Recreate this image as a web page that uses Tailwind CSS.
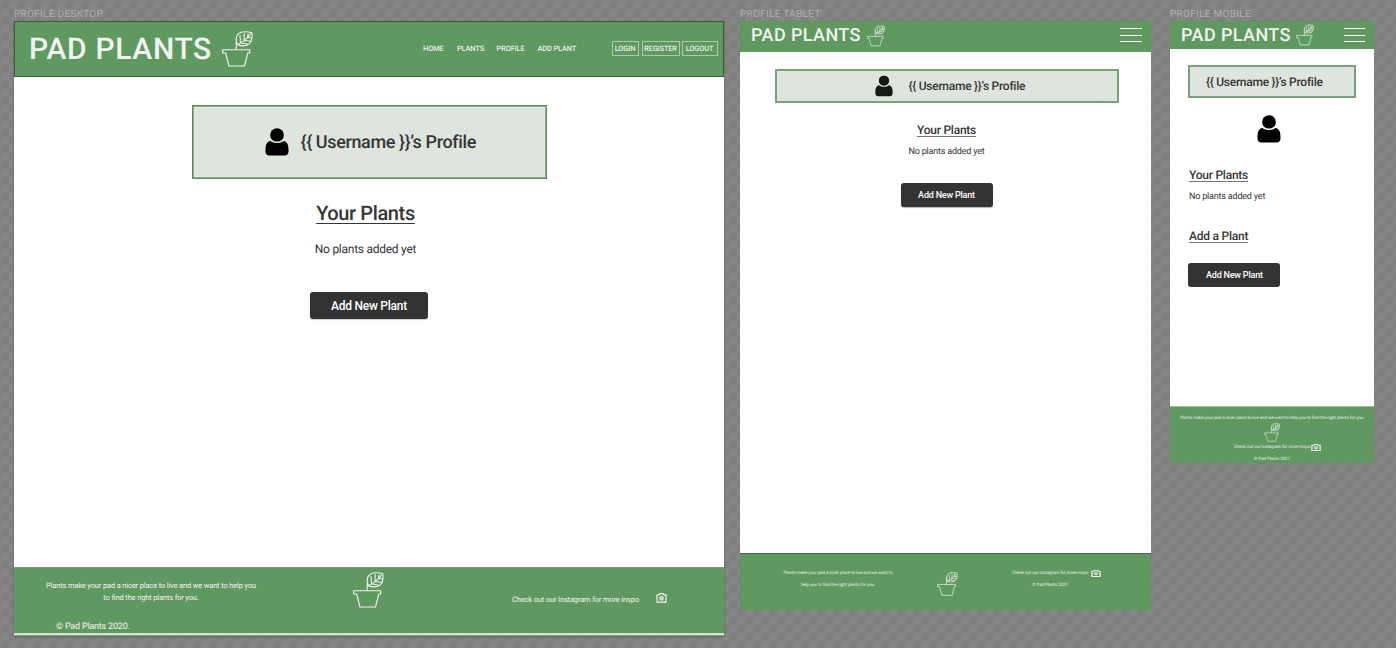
<!DOCTYPE html>
<html lang="en">
<head>
<meta charset="utf-8">
<title>Pad Plants – Profile</title>
<script src="https://cdn.jsdelivr.net/npm/@tailwindcss/browser@4"></script>
</head>
<body class="w-[1396px] h-[648px] overflow-hidden bg-[conic-gradient(#868686_25%,#7f7f7f_0_50%,#868686_0_75%,#7f7f7f_0)] bg-[length:16px_16px] bg-[position:1px_1px] font-['Roboto',sans-serif] text-[#363636] [text-rendering:geometricPrecision]">
<svg class="hidden">
  <symbol id="pot" viewBox="0 0 31 36"><g fill="none" stroke="currentColor" stroke-width="1.1" stroke-linejoin="round" stroke-linecap="round">
    <path d="M.7 18.700h27v3.300h-1.900l-3.300 13h-15.500l-3.400-13h-2.900z"/>
    <path d="M14.200 18.500V8C14.500 3 18 .7 23 .7c3 0 5.500.500 6.700 1C30.500 6 30 10 27.500 12.700c-3 2.700-8.500 2.800-11.800 1C14.500 12 14 10 14.200 8M15.500 13.700C19 12 25 8 28.500 3M18.500 11.800 18 4.500M22 9.500l.3-7M25.500 6.700l.5-3.700M18.500 11.800l7 1.500M22 9.500l6.500.8M25.500 6.500l4 .2"/>
  </g></symbol>
  <symbol id="user" viewBox="0 0 24 28"><ellipse cx="12" cy="6.900" rx="6.900" ry="6.700"/><path d="M5.500 13c3.500 2.800 9.500 2.800 13 0 4 .5 5 4.500 5 9v1.500c0 2.500-1.500 4-4 4h-15c-2.500 0-4-1.500-4-4V22c0-4.500 1-8.500 5-9z"/></symbol>
  <symbol id="cam" viewBox="0 0 11 10"><path d="M1 1.800h2l.9-1.200h3.200l.9 1.200h2v7.400H1z" fill="none" stroke="currentColor" stroke-width="1.200"/><circle cx="5.500" cy="5.300" r="1.900" fill="currentColor" fill-opacity=".6" stroke="currentColor" stroke-width=".9"/></symbol>
</svg>
<main class="flex items-start pl-[14px] pt-[7px]">

  <section class="w-[710px] mr-[16px]">
    <h2 class="h-[14px] leading-[15px] text-[10px] tracking-[.3px] text-[#b0b0b0]">PROFILE DESKTOP</h2>
    <div class="h-[615px] bg-white flex flex-col shadow-[0_1px_2px_rgba(0,0,0,.3)]">
      <header class="h-[56px] shrink-0 bg-[#60995f] border border-[#3c5a3b] flex items-center text-[#f2f2f2]">
        <div class="w-[193px] pl-[14px] pt-[2px] text-[30px] leading-[40px] font-medium tracking-[.65px] whitespace-nowrap">PAD PLANTS</div>
        <svg class="w-[31px] h-[36px] ml-[14px]"><use href="#pot"/></svg>
        <nav class="flex ml-[170px] text-[7.500px] tracking-[-.18px] font-medium whitespace-nowrap text-[#e6efe5]">
          <a class="w-[34px]">HOME</a><a class="w-[39.500px]">PLANTS</a><a class="w-[41px]">PROFILE</a><a class="w-[74px]">ADD PLANT</a>
        </nav>
        <div class="flex gap-[3px] -mt-px text-[7.500px] tracking-[-.18px] font-medium text-[#e6efe5] leading-[13px] text-center whitespace-nowrap">
          <a class="w-[27px] border border-[#a9cba8]">LOGIN</a><a class="w-[38px] border border-[#a9cba8]">REGISTER</a><a class="w-[36px] -ml-px border border-[#a9cba8]">LOGOUT</a>
        </div>
      </header>
      <div class="flex-1 flex flex-col items-center">
        <div class="mt-[28px] w-[355px] h-[74px] border border-[#5d8a5b] bg-[#dde5dc] outline -outline-offset-2 outline-[#8fae8d] flex items-center pl-[72px]">
          <svg class="w-[24px] h-[28px] fill-black"><use href="#user"/></svg>
          <div class="ml-[12px] pt-px text-[18px] tracking-[-.37px] leading-6 font-medium whitespace-nowrap">{{ Username }}’s Profile</div>
        </div>
        <h3 class="mr-[7px] mt-[19px] h-[30px] leading-[30px] text-[20px] tracking-[-.38px] font-medium underline decoration-1 underline-offset-[3px] whitespace-nowrap">Your Plants</h3>
        <p class="mt-[11px] mr-[7px] h-[20px] leading-[20px] text-[12px] tracking-[-.26px] whitespace-nowrap">No plants added yet</p>
        <button class="mt-[33px] w-[118px] h-[27px] rounded-[3px] bg-[#333] text-white text-[12px] tracking-[-.24px] font-medium shadow-[0_1px_1px_rgba(0,0,0,.2)]">Add New Plant</button>
      </div>
      <footer class="h-[66px] shrink-0 bg-[#60995f] border-t border-[#6f9f6e] text-[#f2f2f2] flex items-start">
        <div class="w-[274px]">
          <p class="mt-[12px] text-[7.500px] tracking-[-.15px] leading-[12px] text-center whitespace-nowrap">Plants make your pad a nicer place to live and we want to help you<br>to find the right plants for you.</p>
          <p class="mt-[17px] pl-[42px] text-[9px] tracking-[-.2px] leading-[12px] whitespace-nowrap">© Pad Plants 2020.</p>
        </div>
        <svg class="w-[31px] h-[36px] ml-[65px] mt-[4px]"><use href="#pot"/></svg>
        <p class="ml-[128px] w-[144px] mt-[26px] text-[7.500px] tracking-[-.15px] leading-[12px] whitespace-nowrap">Check out our Instagram for more inspo</p>
        <svg class="w-[11px] h-[10px] mt-[25px]"><use href="#cam"/></svg>
      </footer>
      <div class="h-[3px] shrink-0 border-b border-[#8aa489] bg-[#d6e2d5]"></div>
    </div>
  </section>

  <section class="w-[411px] mr-[19px]">
    <h2 class="h-[14px] leading-[15px] text-[10px] tracking-[.3px] text-[#b0b0b0]">PROFILE TABLET</h2>
    <div class="h-[589px] bg-white flex flex-col">
      <header class="h-[31px] shrink-0 bg-[#60995f] flex items-center text-[#f2f2f2] shadow-[0_5px_0_#fafafa]">
        <div class="w-[127px] pl-[11px] text-[18px] leading-[24px] -mt-px font-medium tracking-[.4px] whitespace-nowrap">PAD PLANTS</div>
        <svg class="w-[18px] h-[22px] -mt-[1px]"><use href="#pot"/></svg>
        <div class="ml-[235px] -mt-[3px] w-[22px] h-[14px] flex flex-col justify-between"><i class="h-px bg-white"></i><i class="h-px bg-white"></i><i class="h-px bg-white"></i></div>
      </header>
      <div class="flex-1 flex flex-col items-center">
        <div class="mt-[17px] ml-[2px] w-[344px] h-[34px] border-2 border-[#7aa179] bg-[#dde5dc] flex items-center pl-[98px]">
          <svg class="w-[18px] h-[22px] fill-[#131a13]"><use href="#user"/></svg>
          <div class="ml-[16px] text-[12px] tracking-[-.26px] leading-5 font-medium whitespace-nowrap">{{ Username }}’s Profile</div>
        </div>
        <h3 class="ml-[2px] mt-[17px] h-[20px] leading-[20px] text-[12px] tracking-[-.24px] font-medium underline decoration-1 underline-offset-2 decoration-[#777] whitespace-nowrap">Your Plants</h3>
        <p class="ml-[2px] mt-[4px] h-[16px] leading-[17px] text-[9px] tracking-[-.19px] whitespace-nowrap">No plants added yet</p>
        <button class="mt-[23px] ml-[2px] w-[92px] h-[24px] pt-px rounded-[3px] bg-[#333] text-white text-[9px] tracking-[-.2px] font-medium shadow-[0_1px_1px_rgba(0,0,0,.3)]">Add New Plant</button>
      </div>
      <footer class="h-[57px] shrink-0 bg-[#60995f] border-t border-[#4a6b49] text-[#e6efe5] flex items-start text-[4.500px] tracking-[-.09px]">
        <p class="ml-[43px] w-[110px] mt-[14px] leading-[12px] text-center whitespace-nowrap">Plants make your pad a nicer place to live and we want to<br>help you to find the right plants for you.</p>
        <svg class="w-[21px] h-[24px] ml-[44px] mt-[18px]"><use href="#pot"/></svg>
        <div class="ml-[54px] w-[76px] mt-[14px] leading-[12px] text-center whitespace-nowrap"><p>Check out our Instagram for more inspo</p><p>© Pad Plants 2021</p></div>
        <svg preserveAspectRatio="none" viewBox="0 0 11 10" class="w-[10px] h-[7px] ml-[3px] mt-[16px]"><path d="M1 1.800h2l.9-1.200h3.200l.9 1.200h2v7.400H1z" fill="none" stroke="currentColor" stroke-width="1.500"/><circle cx="5.500" cy="5.300" r="1.900" fill="currentColor" fill-opacity=".6" stroke="currentColor" stroke-width=".9"/></svg>
      </footer>
    </div>
  </section>

  <section class="w-[204px]">
    <h2 class="h-[14px] leading-[15px] text-[10px] tracking-[.3px] text-[#b0b0b0]">PROFILE MOBILE</h2>
    <div class="h-[442px] bg-white flex flex-col">
      <header class="h-[28px] shrink-0 bg-[#60995f] flex items-center text-[#f2f2f2] shadow-[0_5px_0_#fafafa]">
        <div class="w-[126px] pl-[11px] pt-[2px] text-[18px] leading-[24px] font-medium tracking-[.4px] whitespace-nowrap">PAD PLANTS</div>
        <svg class="w-[18px] h-[22px] -mt-px"><use href="#pot"/></svg>
        <div class="ml-[30px] w-[21px] h-[14px] flex flex-col justify-between"><i class="h-px bg-white"></i><i class="h-px bg-white"></i><i class="h-px bg-white"></i></div>
      </header>
      <div class="flex-1 flex flex-col items-start pl-[18px]">
        <div class="mt-[16px] w-[168px] h-[33px] border-2 border-[#7aa179] bg-[#dde5dc] flex items-center pl-[16px]">
          <div class="text-[12px] tracking-[-.26px] leading-5 font-medium whitespace-nowrap">{{ Username }}’s Profile</div>
        </div>
        <svg class="ml-[69px] mt-[17px] w-[24px] h-[28px] fill-black shrink-0"><use href="#user"/></svg>
        <h3 class="ml-px mt-[22px] h-[20px] leading-[20px] text-[12px] tracking-[-.24px] font-medium underline decoration-1 underline-offset-2 decoration-[#777] whitespace-nowrap">Your Plants</h3>
        <p class="ml-px mt-[4px] h-[16px] leading-[17px] text-[9px] tracking-[-.19px] whitespace-nowrap">No plants added yet</p>
        <h3 class="ml-px mt-[21px] h-[20px] leading-[20px] text-[12px] tracking-[-.24px] font-medium underline decoration-1 underline-offset-2 decoration-[#777] whitespace-nowrap">Add a Plant</h3>
        <button class="ml-[.4px] mt-[17px] w-[92px] h-[24px] pt-px rounded-[3px] bg-[#333] text-white text-[9px] tracking-[-.2px] font-medium">Add New Plant</button>
      </div>
      <footer class="h-[57px] shrink-0 bg-[#60995f] border-t border-[#9bbd9a] text-[#e6efe5] text-[4.500px] tracking-[-.09px] flex flex-col items-center">
        <p class="mt-[8px] leading-[8px] whitespace-nowrap">Plants make your pad a nicer place to live and we want to help you to find the right plants for you.</p>
        <svg class="w-[16px] h-[19px] shrink-0"><use href="#pot"/></svg>
        <div class="flex items-center h-[8px] mt-px ml-[11px]"><p class="w-[76px] pt-px leading-[8px] whitespace-nowrap">Check out our Instagram for more inspo</p><svg preserveAspectRatio="none" viewBox="0 0 11 10" class="w-[10px] h-[7px] ml-px"><path d="M1 1.800h2l.9-1.200h3.200l.9 1.200h2v7.400H1z" fill="none" stroke="currentColor" stroke-width="1.500"/><circle cx="5.500" cy="5.300" r="1.900" fill="currentColor" fill-opacity=".6" stroke="currentColor" stroke-width=".9"/></svg></div>
        <p class="mt-[5px] leading-[8px] whitespace-nowrap">© Pad Plants 2021</p>
      </footer>
    </div>
  </section>
</main>
</body>
</html>
